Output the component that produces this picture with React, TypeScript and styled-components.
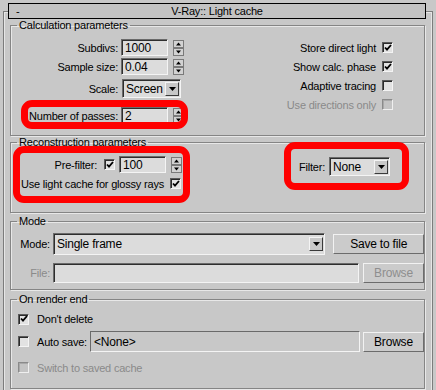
import styled, { createGlobalStyle } from "styled-components";

const GlobalStyle = createGlobalStyle`
  html, body {
    margin: 0;
    padding: 0;
    background: #c8c8c8;
  }
  body {
    font-family: "Liberation Sans", Arial, sans-serif;
    font-size: 11px;
    letter-spacing: -0.2px;
    color: #000;
  }
`;

const Screen = styled.div`
  position: relative;
  width: 436px;
  height: 390px;
  overflow: hidden;
  background: #c8c8c8;
  padding-top: 3px;
  box-sizing: border-box;
`;

const Rollout = styled.div`
  margin: 8px 0 0 3px;
  width: 430px;
  height: 400px;
  box-sizing: border-box;
  border: 1px solid #7c7c7c;
  border-bottom: none;
  box-shadow: inset 1px 1px 0 #e6e6e6, inset -1px 0 0 #e6e6e6;
  padding-left: 4px;
`;

const TitleBar = styled.div`
  margin-top: -9px;
  width: 418px;
  height: 16px;
  box-sizing: border-box;
  border: 1px solid #000;
  background: #c3c3c3;
  display: grid;
  grid-template-columns: 1fr auto 1fr;
  align-items: center;
  line-height: 14px;
`;

const Minus = styled.span`
  padding-left: 7px;
`;

const Group = styled.fieldset<{ $h: number; $mt?: number }>`
  margin: ${(p) => p.$mt ?? 0}px 0 0 2px;
  padding: 0;
  width: 415px;
  height: ${(p) => p.$h}px;
  min-width: 0;
  box-sizing: border-box;
  border: 1px solid #858585;
  box-shadow: 1px 1px 0 #e8e8e8, inset 1px 1px 0 #e8e8e8;
`;

const Legend = styled.legend`
  margin-left: 6px;
  padding: 0 2px;
  line-height: 13px;
`;

const Columns = styled.div<{ $pt: number; $pr: number }>`
  display: flex;
  justify-content: space-between;
  align-items: flex-start;
  padding: ${(p) => p.$pt}px ${(p) => p.$pr}px 0 0;
`;

const Stack = styled.div<{ $w?: number; $end?: boolean; $pt?: number }>`
  display: flex;
  flex-direction: column;
  align-items: ${(p) => (p.$end ? "flex-end" : "stretch")};
  ${(p) => (p.$w ? `width: ${p.$w}px;` : "")}
  padding-top: ${(p) => p.$pt ?? 0}px;
`;

const Row = styled.div<{ $h: number; $mt?: number }>`
  display: flex;
  align-items: center;
  height: ${(p) => p.$h}px;
  margin-top: ${(p) => p.$mt ?? 0}px;
`;

const Label = styled.span<{ $w?: number; $gap?: number; $off?: boolean }>`
  ${(p) => (p.$w ? `width: ${p.$w}px; text-align: right;` : "")}
  margin-right: ${(p) => p.$gap ?? 0}px;
  white-space: nowrap;
  color: ${(p) => (p.$off ? "#8a8a8a" : "#000")};
`;

const TextAfter = styled.span<{ $off?: boolean; $gap?: number }>`
  margin-left: ${(p) => p.$gap ?? 8}px;
  white-space: nowrap;
  color: ${(p) => (p.$off ? "#8a8a8a" : "#000")};
`;

const Sunken = styled.div<{ $w: number; $h: number; $flat?: boolean }>`
  width: ${(p) => p.$w}px;
  height: ${(p) => p.$h}px;
  box-sizing: border-box;
  display: flex;
  align-items: center;
  padding-left: 3px;
  background: ${(p) => (p.$flat ? "#c8c8c8" : "#dcdcdc")};
  border: 1px solid;
  border-color: #6a6a6a #f4f4f4 #f4f4f4 #6a6a6a;
  box-shadow: ${(p) => (p.$flat ? "none" : "inset 1px 1px 0 #2e2e2e")};
  font-size: 12px;
  white-space: nowrap;
`;

const Select = styled(Sunken)`
  justify-content: space-between;
  padding-right: 1px;
`;

const ArrowBtn = styled.div`
  width: 14px;
  height: 14px;
  flex: none;
  box-sizing: border-box;
  background: #c8c8c8;
  border: 1px solid;
  border-color: #f4f4f4 #3a3a3a #3a3a3a #f4f4f4;
  display: flex;
  align-items: center;
  justify-content: center;
`;

const Button = styled.div<{ $w: number; $h: number; $off?: boolean; $ml?: number }>`
  width: ${(p) => p.$w}px;
  height: ${(p) => p.$h}px;
  margin-left: ${(p) => p.$ml ?? 0}px;
  box-sizing: border-box;
  display: flex;
  align-items: center;
  justify-content: center;
  background: #cbcbcb;
  border: 1px solid;
  border-color: #f2f2f2 #6c6c6c #6c6c6c #f2f2f2;
  font-size: 12px;
  color: ${(p) => (p.$off ? "#8e8e8e" : "#000")};
`;

const Box = styled.div<{ $off?: boolean; $ml?: number }>`
  width: 11px;
  height: 11px;
  flex: none;
  margin-left: ${(p) => p.$ml ?? 0}px;
  box-sizing: border-box;
  background: ${(p) => (p.$off ? "#c4c4c4" : "#e2e2e2")};
  border: 1px solid;
  border-color: ${(p) =>
    p.$off ? "#8a8a8a #efefef #efefef #8a8a8a" : "#5a5a5a #f4f4f4 #f4f4f4 #5a5a5a"};
  box-shadow: inset 1px 1px 0 ${(p) => (p.$off ? "#a8a8a8" : "#2a2a2a")};
  display: flex;
  align-items: center;
  justify-content: center;
`;

const Highlight = styled.div<{ $x: number; $y: number; $w: number; $h: number }>`
  position: absolute;
  left: ${(p) => p.$x}px;
  top: ${(p) => p.$y}px;
  width: ${(p) => p.$w}px;
  height: ${(p) => p.$h}px;
  box-sizing: border-box;
  border: 7px solid #ff0000;
  border-radius: 11px;
  filter: blur(0.5px);
  pointer-events: none;
`;

const Down = () => (
  <svg width="7" height="4" viewBox="0 0 7 4">
    <path d="M0 0h7L3.5 4z" fill="#000" />
  </svg>
);

const Spinner = () => (
  <svg width="11" height="16" viewBox="0 0 11 16" style={{ marginLeft: 5, flex: "none" }}>
    <rect x="0.5" y="0.5" width="10" height="7" fill="#d2d2d2" stroke="#7a7a7a" />
    <rect x="0.5" y="8.5" width="10" height="7" fill="#d2d2d2" stroke="#7a7a7a" />
    <path d="M3 5.5h5L5.5 2.5z" fill="#000" />
    <path d="M3 10.5h5L5.5 13.5z" fill="#000" />
  </svg>
);

const Check = ({ on, off, ml }: { on?: boolean; off?: boolean; ml?: number }) => (
  <Box $off={off} $ml={ml}>
    {on && (
      <svg width="8" height="8" viewBox="0 0 8 8">
        <path d="M1 3.5l2 2.2L7 1" fill="none" stroke="#000" strokeWidth="1.8" />
      </svg>
    )}
  </Box>
);

const SpinField = ({ label, value, mt }: { label: string; value: string; mt?: number }) => (
  <Row $h={17} $mt={mt}>
    <Label $w={107} $gap={3}>
      {label}
    </Label>
    <Sunken $w={47} $h={17}>
      {value}
    </Sunken>
    <Spinner />
  </Row>
);

const CheckRow = ({ label, on, off }: { label: string; on?: boolean; off?: boolean }) => (
  <Row $h={19}>
    <Label $gap={6} $off={off} style={{ marginLeft: "auto" }}>
      {label}
    </Label>
    <Check on={on} off={off} />
  </Row>
);

export default function App() {
  return (
    <>
      <GlobalStyle />
      <Screen>
        <Rollout>
          <TitleBar>
            <Minus>-</Minus>
            <span>V-Ray:: Light cache</span>
            <span />
          </TitleBar>

          <Group $h={117}>
            <Legend>Calculation parameters</Legend>
            <Columns $pt={7} $pr={31}>
              <Stack>
                <SpinField label="Subdivs:" value="1000" />
                <SpinField label="Sample size:" value="0.04" mt={2} />
                <Row $h={19} $mt={4}>
                  <Label $w={107} $gap={4}>
                    Scale:
                  </Label>
                  <Select $w={59} $h={19}>
                    Screen
                    <ArrowBtn>
                      <Down />
                    </ArrowBtn>
                  </Select>
                </Row>
                <SpinField label="Number of passes:" value="2" mt={9} />
              </Stack>
              <Stack style={{ marginTop: -1 }}>
                <CheckRow label="Store direct light" on />
                <CheckRow label="Show calc. phase" on />
                <CheckRow label="Adaptive tracing" />
                <CheckRow label="Use directions only" off />
              </Stack>
            </Columns>
          </Group>

          <Group $h={77}>
            <Legend>Reconstruction parameters</Legend>
            <Columns $pt={7} $pr={34}>
              <Stack $w={171} $end>
                <Row $h={17}>
                  <Label $gap={7}>Pre-filter:</Label>
                  <Check on />
                  <Sunken $w={47} $h={17} style={{ marginLeft: 4 }}>
                    100
                  </Sunken>
                  <Spinner />
                </Row>
                <Row $h={17} $mt={2} style={{ paddingRight: 1 }}>
                  <Label $gap={6}>Use light cache for glossy rays</Label>
                  <Check on />
                </Row>
              </Stack>
              <Row $h={19} $mt={1}>
                <Label $gap={4}>Filter:</Label>
                <Select $w={61} $h={19}>
                  None
                  <ArrowBtn>
                    <Down />
                  </ArrowBtn>
                </Select>
              </Row>
            </Columns>
          </Group>

          <Group $h={75} $mt={2}>
            <Legend>Mode</Legend>
            <Stack $pt={5}>
              <Row $h={22}>
                <Label $w={39} $gap={3}>
                  Mode:
                </Label>
                <Select $w={273} $h={22}>
                  Single frame
                  <ArrowBtn>
                    <Down />
                  </ArrowBtn>
                </Select>
                <Button $w={91} $h={20} $ml={8}>
                  Save to file
                </Button>
              </Row>
              <Row $h={20} $mt={8}>
                <Label $w={39} $gap={3} $off>
                  File:
                </Label>
                <Sunken $w={306} $h={20} />
                <Button $w={61} $h={20} $ml={4} $off>
                  Browse
                </Button>
              </Row>
            </Stack>
          </Group>

          <Group $h={96} $mt={3}>
            <Legend>On render end</Legend>
            <Stack $pt={4} style={{ paddingLeft: 7 }}>
              <Row $h={18}>
                <Check on />
                <TextAfter>Don't delete</TextAfter>
              </Row>
              <Row $h={21} $mt={3}>
                <Check />
                <TextAfter>Auto save:</TextAfter>
                <Sunken $w={270} $h={21} $flat style={{ marginLeft: 3 }}>
                  &lt;None&gt;
                </Sunken>
                <Button $w={61} $h={20} $ml={3}>
                  Browse
                </Button>
              </Row>
              <Row $h={19} $mt={6}>
                <Check off />
                <TextAfter $off>Switch to saved cache</TextAfter>
              </Row>
            </Stack>
          </Group>
        </Rollout>

        <Highlight $x={21} $y={100} $w={167} $h={29} />
        <Highlight $x={13} $y={146} $w={177} $h={57} />
        <Highlight $x={284} $y={142} $w={125} $h={48} />
      </Screen>
    </>
  );
}
